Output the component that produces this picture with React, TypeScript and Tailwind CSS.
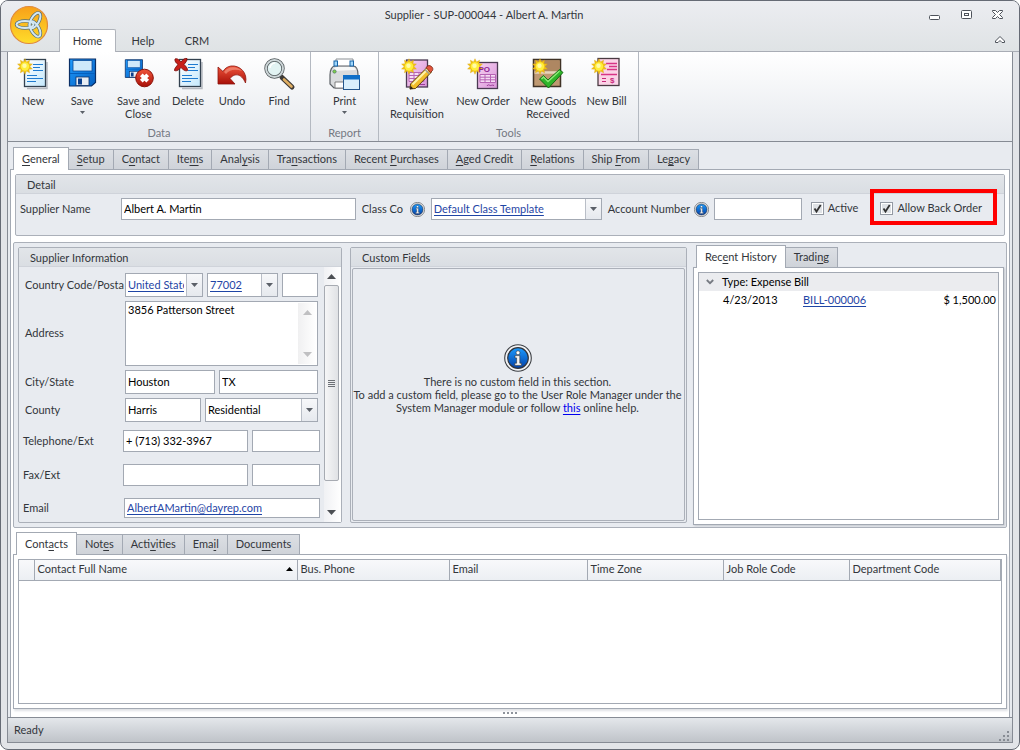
import { useState, type ReactNode } from "react";
import clsx from "clsx";

const inputClass =
  "min-w-0 border border-[#a3a9b3] bg-white px-[2px] pb-[2px] text-[11px] leading-4 text-black outline-none";

/* "&" marks the access key, as in a menu caption */
function Caption({ text }: { text: string }) {
  const at = text.indexOf("&");
  if (at < 0) return <>{text}</>;
  return (
    <>
      {text.slice(0, at)}
      <span className="underline underline-offset-2">{text[at + 1]}</span>
      {text.slice(at + 2)}
    </>
  );
}

function Tabs({ items, className }: { items: string[]; className?: string }) {
  const [active, setActive] = useState(0);
  return (
    <div role="tablist" className={clsx("flex h-[22px] items-end", className)}>
      {items.map((item, i) => (
        <button
          key={item}
          type="button"
          role="tab"
          aria-selected={i === active}
          onClick={() => setActive(i)}
          className={clsx(
            "shrink-0 border-t border-r border-[#a3a9b3] px-2 whitespace-nowrap",
            i === 0 && "border-l",
            i === active
              ? "relative -mb-px h-[23px] bg-white"
              : "h-5 bg-linear-to-b from-[#dcdfe4] to-[#cfd3d9]"
          )}
        >
          <Caption text={item} />
        </button>
      ))}
    </div>
  );
}

function Group({
  title,
  className,
  children,
}: {
  title: string;
  className?: string;
  children: ReactNode;
}) {
  return (
    <section
      className={clsx(
        "flex flex-col rounded-xs border border-[#abb0b9] bg-[#e8ebf0]",
        className
      )}
    >
      <h2 className="h-[19px] shrink-0 border-b border-[#cfd3da] bg-linear-to-b from-[#e2e5e9] to-[#dadee3] px-[11px] leading-[19px]">
        {title}
      </h2>
      {children}
    </section>
  );
}

function DropDown({
  id,
  label,
  value,
  link,
  className,
}: {
  id: string;
  label?: string;
  value: string;
  link?: boolean;
  className?: string;
}) {
  return (
    <div className={clsx("relative", className)}>
      <select
        id={id}
        aria-label={label}
        defaultValue={value}
        className={clsx(
          "h-full w-full appearance-none border border-[#a3a9b3] bg-white pr-[18px] pl-[2px] text-[11px] outline-none",
          link ? "text-[#1f45a5] underline underline-offset-2" : "text-black"
        )}
      >
        <option>{value}</option>
      </select>
      <span className="pointer-events-none absolute inset-y-px right-px flex w-4 items-center justify-center border-l border-[#b9bec7] bg-linear-to-b from-[#f7f8fa] to-[#e6e9ee]">
        <svg width="7" height="4" viewBox="0 0 7 4">
          <path d="M0 0h7L3.5 4z" fill="#5b6068" />
        </svg>
      </span>
    </div>
  );
}

function CheckBox({ id, label, children }: { id: string; label: string; children?: ReactNode }) {
  return (
    <div className="relative flex h-4 items-center pb-[2px]">
      <span className="grid size-[13px] shrink-0">
        <input
          id={id}
          type="checkbox"
          defaultChecked
          className="peer col-start-1 row-start-1 size-[13px] appearance-none border border-[#9399a3] bg-[#dfe2e6] shadow-[inset_0_0_0_1px_#fff]"
        />
        <svg
          viewBox="0 0 13 13"
          className="pointer-events-none invisible col-start-1 row-start-1 size-[13px] peer-checked:visible"
        >
          <path d="M3.5 6.5 5.5 9.5 9.7 3" fill="none" stroke="#333" strokeWidth="1.8" />
        </svg>
      </span>
      <label htmlFor={id} className="ml-1 whitespace-nowrap">
        {label}
      </label>
      {children}
    </div>
  );
}

function InfoIcon({ size }: { size: number }) {
  return (
    <svg width={size} height={size} viewBox="0 0 28 28" className="shrink-0">
      <defs>
        <linearGradient id="info" x1="0" y1="0" x2="0" y2="1">
          <stop offset="0" stopColor="#1b9bff" />
          <stop offset="1" stopColor="#0340a8" />
        </linearGradient>
      </defs>
      <circle cx="14" cy="14" r="13.3" fill="#f2f3f5" stroke="#3c3f44" strokeWidth="1.1" />
      <circle cx="14" cy="14" r="10.3" fill="url(#info)" stroke="#30343c" strokeWidth="1.2" />
      <circle cx="14" cy="8.8" r="2" fill="#fff" stroke="#333" strokeWidth=".6" />
      <path
        d="M11 11.6h4.8v7.6h1.6v2.2h-6.6v-2.2h1.8v-5.3H11z"
        fill="#f4f4f4"
        stroke="#333"
        strokeWidth=".6"
      />
    </svg>
  );
}

const starPoints = Array.from({ length: 20 }, (_, i) => {
  const r = i % 2 ? 4.8 : 7.8;
  const a = (i * Math.PI) / 10;
  return `${(8 + r * Math.sin(a)).toFixed(2)},${(8.5 - r * Math.cos(a)).toFixed(2)}`;
}).join(" ");

function Star() {
  return (
    <g>
      <polygon points={starPoints} fill="#f2c414" stroke="#d9a20c" strokeWidth=".4" />
      <circle cx="8" cy="8.5" r="4.200" fill="#ffee3c" />
      <circle cx="7.500" cy="7.800" r="2.200" fill="#fffba8" />
    </g>
  );
}

function Sheet() {
  return (
    <g>
      <path d="M10 30.500h20V4" stroke="#b6bac0" strokeWidth="1.500" fill="none" />
      <rect x="7.500" y="1.500" width="21" height="27" fill="url(#sheet)" stroke="#33414f" strokeWidth="1.300" />
      <path
        d="M16 6.500h10M16 9.500h7M16 12.500h10M10 17.500h10M10 20.500h16M10 23.500h9"
        stroke="#1f7bd0"
        strokeWidth="1.200"
      />
    </g>
  );
}

function Disk() {
  return (
    <g>
      <path d="M3.500 1h26v23.500L25.500 28h-22z" fill="url(#disk)" stroke="#0a2f66" strokeWidth="1.200" />
      <rect x="7" y="2.500" width="19" height="10.500" fill="#cfe9fb" stroke="#0a4a98" strokeWidth=".8" />
      <path d="M4 15.500h25" stroke="#0660bd" strokeWidth="1" />
      <rect x="10" y="19" width="13" height="8.500" fill="#e9eef4" stroke="#0a2f66" strokeWidth=".8" />
      <rect x="12" y="20.500" width="4" height="6" fill="#0a3f8c" />
    </g>
  );
}

/* gradients shared by the ribbon icons */
function IconDefs() {
  return (
    <svg width="0" height="0" className="absolute">
      <defs>
        <linearGradient id="disk" x1="0" y1="0" x2="1" y2="1">
          <stop offset="0" stopColor="#1f9bff" />
          <stop offset="1" stopColor="#0560c0" />
        </linearGradient>
        <linearGradient id="sheet" x1="0" y1="0" x2="1" y2="1">
          <stop offset="0" stopColor="#ffffff" />
          <stop offset="1" stopColor="#c4e8fc" />
        </linearGradient>
        <linearGradient id="violet" x1="0" y1="0" x2="1" y2="1">
          <stop offset="0" stopColor="#f6d3f2" />
          <stop offset="1" stopColor="#d993d8" />
        </linearGradient>
        <linearGradient id="red" x1="0" y1="0" x2="0" y2="1">
          <stop offset="0" stopColor="#f0553c" />
          <stop offset="1" stopColor="#a81008" />
        </linearGradient>
      </defs>
    </svg>
  );
}

const icons: Record<string, ReactNode> = {
  new: (
    <>
      <Sheet />
      <Star />
    </>
  ),
  save: <Disk />,
  saveClose: (
    <>
      <g transform="translate(0 1) scale(.66)">
        <Disk />
      </g>
      <circle cx="21.500" cy="20" r="8.800" fill="url(#red)" stroke="#8b1208" strokeWidth="1" />
      <path d="M18.300 16.800l6.400 6.400m0-6.400l-6.400 6.400" stroke="#fff" strokeWidth="3.800" />
    </>
  ),
  delete: (
    <>
      <Sheet />
      <path
        d="M3 1c2.500-1 4 1 6 3 2-2.500 3.500-4 6-3.500.500 2-1.500 4-3 6 2 2 3.500 3.500 3.500 6-2.500 1-4.500-1-6.500-3-2 2-4 4-6.500 3 0-2.500 2-4 3.500-6C4 5 2.500 3 3 1z"
        fill="#c8201a"
        stroke="#7c0f0b"
        strokeWidth=".9"
      />
    </>
  ),
  undo: (
    <>
      <path
        d="M2 9v17h17l-5-5.500c4-5 11-6 15.500 4.500C32 15 24 7 15 8c-4 .6-6.500 2.800-8 5.500z"
        fill="url(#red)"
        stroke="#8e150c"
        strokeWidth=".8"
      />
      <path d="M8 14c4-6 13-6 18-1-6-2-12-2-16 3z" fill="#f7a08c" opacity=".6" />
    </>
  ),
  find: (
    <>
      <path d="M19 19.500l10 9.500" stroke="#3f3a36" strokeWidth="5" strokeLinecap="round" />
      <path d="M21 21.500l7.500 7" stroke="#dfae62" strokeWidth="2.600" strokeLinecap="round" />
      <circle cx="11.500" cy="10.500" r="8.500" fill="#e2f3f3" stroke="#4f5659" strokeWidth="3.400" />
      <circle cx="11.500" cy="10.500" r="8.500" fill="none" stroke="#cdd6d8" strokeWidth="1.900" />
      <path d="M7 10a5 5 0 0 1 5-5" stroke="#fff" strokeWidth="1.500" fill="none" />
    </>
  ),
  print: (
    <>
      <path d="M7 8V1h17v7" fill="#fff" stroke="#8b9095" />
      <path
        d="M1 26V17c0-5 2-9 5-9h18c3 0 5 3.500 5 9v10l-3 3H5z"
        fill="#d9dbdd"
        stroke="#5c6166"
        strokeWidth="1.200"
      />
      <path d="M4 13c1-3 2-4 4-4h15c2 0 3 1 4 3z" fill="#f6f7f7" />
      <path d="M6 30v-6h9v6z" fill="#fff" stroke="#666" strokeWidth=".8" />
      <rect x="5" y="3" width="3.500" height="5" fill="#9fd6fb" stroke="#1764a8" />
      <rect x="21" y="3" width="3.500" height="5" fill="#9fd6fb" stroke="#1764a8" />
      <circle cx="5.500" cy="13.500" r="1.700" fill="#7fd04a" stroke="#466" strokeWidth=".6" />
      <rect x="14.500" y="17.500" width="16" height="14" fill="#d9effc" stroke="#24568c" />
      <rect x="14" y="17" width="17" height="4.500" fill="#0f6fc8" />
    </>
  ),
  requisition: (
    <>
      <rect x="5.500" y="2" width="21" height="27" fill="url(#violet)" stroke="#4a3a52" strokeWidth="1.300" />
      <path
        d="M8 14.500h15v9H8zM8 17.500h15M8 20.500h15M13 14.500v9M18 14.500v9"
        stroke="#b663b4"
        fill="#f6dcf4"
      />
      <path d="M18 26.500h6" stroke="#9a3d98" />
      <Star />
      <path d="M9.500 26L26 9.500l4.500 4.500L14.500 30.500l-5.500.5z" fill="#f2bd2b" stroke="#5e430c" strokeWidth="1" />
      <path d="M11.500 26.500L27 11" stroke="#fdf3a8" strokeWidth="2" />
      <path
        d="M25 9.500l2-1.700c2.500-1 6 2 4.500 4.700l-2 2z"
        fill="#e2553c"
        stroke="#752416"
        strokeWidth=".8"
      />
      <path d="M23.500 11l5 5" stroke="#9a9a9a" strokeWidth="1.200" />
      <path d="M8.800 31.200l.8-3.500 2.800 3z" fill="#2f2415" />
    </>
  ),
  order: (
    <>
      <rect x="10.500" y="4.500" width="20" height="26" fill="url(#violet)" stroke="#4a3a52" strokeWidth="1.300" />
      <path
        d="M13 16.500h15.500v8H13zM13 19.200h15.500M13 21.800h15.500M18 16.500v8M23.500 16.500v8"
        stroke="#b663b4"
        fill="#f6dcf4"
      />
      <path d="M20 28c1-2 2-1 3-.5s2-1 4 0" stroke="#9a3d98" fill="none" />
      <Star />
      <text
        x="11.500"
        y="14"
        fontSize="8"
        fontWeight="700"
        fill="#8c2390"
        fontFamily="Liberation Sans, sans-serif"
      >
        PO
      </text>
    </>
  ),
  goods: (
    <>
      <rect x="1.500" y="1.500" width="27" height="27" fill="#bf9972" stroke="#3f3226" strokeWidth="1.500" />
      <rect x="2.500" y="2.500" width="25" height="11" fill="#ae8762" />
      <path d="M2.500 14.500h25" stroke="#e6d4bd" strokeWidth="2.500" />
      <Star />
      <path
        d="M7.500 21l4-3.500 4.500 4.500L27.500 11.500l3.500 3L16.500 30z"
        fill="#2fb52a"
        stroke="#136b12"
        strokeWidth="1"
      />
      <path d="M9.500 21l2-2 4.500 4.500L27.500 13" stroke="#8fea78" strokeWidth="1.300" fill="none" />
    </>
  ),
  bill: (
    <>
      <rect x="7" y="0.500" width="21" height="27" fill="#fbd3e6" stroke="#4a3a42" strokeWidth="1.300" />
      <path d="M15 5.500h11M18 8.500h8M16 11.500h10M10 16.500h16" stroke="#d83486" strokeWidth="1.300" />
      <path d="M11 20.500h4M11 23.500h4" stroke="#c9277a" strokeWidth="1.200" />
      <text
        x="19"
        y="25"
        fontSize="8"
        fontWeight="700"
        fill="#c9277a"
        fontFamily="Liberation Sans, sans-serif"
      >
        $
      </text>
      <Star />
    </>
  ),
};

type Command = { icon: string; lines: string[]; width: string; menu?: boolean };

const ribbon: { title: string; padding: string; commands: Command[] }[] = [
  {
    title: "Data",
    padding: "pl-[2px] pr-[9px]",
    commands: [
      { icon: "new", lines: ["New"], width: "w-[46px]" },
      { icon: "save", lines: ["Save"], width: "w-[52px]", menu: true },
      { icon: "saveClose", lines: ["Save and", "Close"], width: "w-[61px]" },
      { icon: "delete", lines: ["Delete"], width: "w-[38px]" },
      { icon: "undo", lines: ["Undo"], width: "w-[50px]" },
      { icon: "find", lines: ["Find"], width: "w-[44px]" },
    ],
  },
  {
    title: "Report",
    padding: "",
    commands: [{ icon: "print", lines: ["Print"], width: "w-[67px]", menu: true }],
  },
  {
    title: "Tools",
    padding: "px-[5px]",
    commands: [
      { icon: "requisition", lines: ["New", "Requisition"], width: "w-[66px]" },
      { icon: "order", lines: ["New Order"], width: "w-[66px]" },
      { icon: "goods", lines: ["New Goods", "Received"], width: "w-[64px]" },
      { icon: "bill", lines: ["New Bill"], width: "w-[53px]" },
    ],
  },
];

function Ribbon() {
  return (
    <div className="mx-[6px] flex h-[90px] border-x border-b border-[#868b94] bg-linear-to-b from-white to-[#e5e8ed]">
      <IconDefs />
      {ribbon.map((group) => (
        <div key={group.title} className="flex flex-col border-r border-[#b4b9c1]">
          <div className={clsx("flex flex-1 pt-[6px]", group.padding)}>
            {group.commands.map((c) => (
              <button
                key={c.icon}
                type="button"
                className={clsx("flex flex-col items-center leading-[13px]", c.width)}
              >
                <svg width="32" height="32" viewBox="0 0 32 32" className="mb-1 overflow-visible">
                  {icons[c.icon]}
                </svg>
                {c.lines.map((line) => (
                  <span key={line} className="whitespace-nowrap">
                    {line}
                  </span>
                ))}
                {c.menu && (
                  <svg width="5" height="3" viewBox="0 0 5 3" className="mt-1">
                    <path d="M0 0h5L2.500 3z" fill="#5b6068" />
                  </svg>
                )}
              </button>
            ))}
          </div>
          <div className="h-[15px] text-center leading-[13px] text-[#747882]">{group.title}</div>
        </div>
      ))}
    </div>
  );
}

function Knot() {
  return (
    <>
      <ellipse cx="16" cy="19.500" rx="8.500" ry="3.600" />
      <ellipse cx="26" cy="15.500" rx="8.500" ry="4" transform="rotate(-60 26 15.500)" />
      <ellipse cx="26" cy="24" rx="8.500" ry="4" transform="rotate(60 26 24)" />
    </>
  );
}

function TitleBar() {
  return (
    <header className="flex h-[51px] border-b border-[#a9adb5] bg-linear-to-b from-[#ecedf1] to-[#dfe3e5]">
      <button type="button" aria-label="Application menu" className="mt-1 ml-2 size-10 shrink-0">
        <svg width="40" height="40" viewBox="0 0 40 40">
          <defs>
            <linearGradient id="orb" x1="0" y1="0" x2="0" y2="1">
              <stop offset="0" stopColor="#f7a019" />
              <stop offset="1" stopColor="#ffdd2b" />
            </linearGradient>
          </defs>
          <circle cx="20" cy="20" r="18.500" fill="url(#orb)" stroke="#e08a3c" strokeWidth="1.200" />
          <g fill="none" stroke="#4f6b7a" strokeWidth="3.400">
            <Knot />
          </g>
          <g fill="none" stroke="#d3e7f2" strokeWidth="2">
            <Knot />
          </g>
        </svg>
      </button>
      <div className="flex min-w-0 flex-1 flex-col">
        <div className="flex h-[29px] items-center">
          <h1 className="flex-1 truncate text-center">Supplier - SUP-000044 - Albert A. Martin</h1>
          <div className="flex pr-[6px] text-[#4d525a]">
            <button type="button" aria-label="Minimize" className="flex w-[31px] justify-center">
              <svg width="13" height="13" viewBox="0 0 13 13" fill="none" stroke="currentColor">
                <rect x="1.500" y="6.500" width="10" height="4" rx="1" fill="#fff" />
              </svg>
            </button>
            <button type="button" aria-label="Restore" className="flex w-[32px] justify-center">
              <svg width="13" height="13" viewBox="0 0 13 13" fill="none" stroke="currentColor">
                <rect x="1.500" y="1.500" width="10" height="8" rx="1" fill="#fff" />
                <rect x="4.500" y="4.500" width="4" height="2" />
              </svg>
            </button>
            <button type="button" aria-label="Close" className="flex w-[31px] justify-center">
              <svg width="13" height="13" viewBox="0 0 13 13" fill="#fff" stroke="currentColor">
                <path d="M1.500 1.500h3l2 2 2-2h3v1L8.500 5.500l3 3v1h-3l-2-2-2 2h-3v-1l3-3-3-3z" />
              </svg>
            </button>
          </div>
        </div>
        <div role="tablist" className="flex items-end pl-[10px]">
          <button
            type="button"
            role="tab"
            aria-selected="true"
            className="relative -mb-px h-[23px] w-[57px] rounded-t-xs border border-b-0 border-[#b0b4bb] bg-white"
          >
            Home
          </button>
          <button type="button" role="tab" aria-selected="false" className="h-5 w-[54px]">
            Help
          </button>
          <button type="button" role="tab" aria-selected="false" className="h-5 w-[54px]">
            CRM
          </button>
          <button type="button" aria-label="Collapse ribbon" className="mr-[14px] ml-auto self-center">
            <svg width="10" height="8" viewBox="0 0 10 8" fill="#fff" stroke="#4d525a">
              <path d="M5 .5l4.500 4.500v1.500H7L5 4.500 3 6.500H.5V5z" />
            </svg>
          </button>
        </div>
      </div>
    </header>
  );
}

function DetailGroup() {
  return (
    <Group title="Detail" className="mx-1 h-[62px]">
      <div className="flex h-[30px] items-center pl-1">
        <label htmlFor="name" className="w-[101px] shrink-0">
          Supplier Name
        </label>
        <input id="name" defaultValue="Albert A. Martin" className={clsx(inputClass, "h-[22px] flex-1")} />
        <label htmlFor="class" className="ml-[6px] w-12 shrink-0 whitespace-nowrap">
          Class Co
        </label>
        <InfoIcon size={15} />
        <DropDown
          id="class"
          value="Default Class Template"
          link
          className="ml-[6px] h-[22px] w-[171px] shrink-0"
        />
        <label htmlFor="account" className="ml-[6px] w-[86px] shrink-0 whitespace-nowrap">
          Account Number
        </label>
        <InfoIcon size={15} />
        <input id="account" className={clsx(inputClass, "mr-[9px] ml-[5px] h-[22px] w-[88px] shrink-0")} />
        <CheckBox id="active" label="Active" />
        <div className="mr-[22px] ml-[22px]">
          <CheckBox id="backorder" label="Allow Back Order">
            {/* highlight frame */}
            <span className="pointer-events-none absolute -top-3 -right-[15px] -bottom-2 -left-[10px] border-4 border-[#f00]" />
          </CheckBox>
        </div>
      </div>
    </Group>
  );
}

function SupplierGroup() {
  return (
    <Group title="Supplier Information" className="w-[324px] shrink-0">
      <div className="flex flex-1">
        <form className="flex min-w-0 flex-1 flex-col pt-[6px]">
          <div className="flex flex-col gap-1 pr-[2px] pl-[6px]">
            <div className="flex h-6 items-center gap-1">
              <label htmlFor="country" className="-mr-1 w-[100px] shrink-0 whitespace-nowrap">
                Country Code/Posta
              </label>
              <DropDown
                id="country"
                value="United States of America"
                link
                className="h-6 w-[78px] shrink-0"
              />
              <DropDown id="postal" label="Postal code" value="77002" link className="h-6 w-[71px] shrink-0" />
              <input aria-label="Postal extension" className={clsx(inputClass, "h-6 flex-1")} />
            </div>
            <div className="flex items-center">
              <label htmlFor="address" className="w-[100px] shrink-0">
                Address
              </label>
              <div className="flex h-[65px] min-w-0 flex-1 border border-[#a3a9b3] bg-white p-px">
                <textarea
                  id="address"
                  defaultValue="3856 Patterson Street"
                  className="min-w-0 flex-1 resize-none px-px text-[11px] leading-[14px] text-black outline-none"
                />
                <div className="flex w-[18px] shrink-0 flex-col items-center justify-between bg-linear-to-r from-[#f0f0f1] to-white py-[7px]">
                  <svg width="9" height="5" viewBox="0 0 9 5">
                    <path d="M0 5h9L4.500 0z" fill="#c0c0c2" />
                  </svg>
                  <svg width="9" height="5" viewBox="0 0 9 5">
                    <path d="M0 0h9L4.500 5z" fill="#c0c0c2" />
                  </svg>
                </div>
              </div>
            </div>
            <div className="flex h-6 items-center gap-1">
              <label htmlFor="city" className="-mr-1 w-[100px] shrink-0">
                City/State
              </label>
              <input id="city" defaultValue="Houston" className={clsx(inputClass, "h-6 w-[90px] shrink-0")} />
              <input aria-label="State" defaultValue="TX" className={clsx(inputClass, "h-6 flex-1")} />
            </div>
            <div className="flex h-6 items-center gap-1">
              <label htmlFor="county" className="-mr-1 w-[100px] shrink-0">
                County
              </label>
              <input id="county" defaultValue="Harris" className={clsx(inputClass, "h-6 w-[76px] shrink-0")} />
              <DropDown id="addressType" label="Address type" value="Residential" className="h-6 flex-1" />
            </div>
          </div>
          <div className="mt-2 flex flex-col gap-3 pl-1">
            <div className="flex h-[22px] items-center gap-1">
              <label htmlFor="phone" className="-mr-1 w-[100px] shrink-0">
                Telephone/Ext
              </label>
              <input
                id="phone"
                defaultValue="+ (713) 332-3967"
                className={clsx(inputClass, "h-[22px] w-[125px] shrink-0")}
              />
              <input aria-label="Telephone extension" className={clsx(inputClass, "h-[22px] flex-1")} />
            </div>
            <div className="flex h-[22px] items-center gap-1">
              <label htmlFor="fax" className="-mr-1 w-[100px] shrink-0">
                Fax/Ext
              </label>
              <input id="fax" className={clsx(inputClass, "h-[22px] w-[125px] shrink-0")} />
              <input aria-label="Fax extension" className={clsx(inputClass, "h-[22px] flex-1")} />
            </div>
            <div className="flex h-5 items-center">
              <label htmlFor="email" className="w-[101px] shrink-0">
                Email
              </label>
              <div className="flex h-5 min-w-0 flex-1 items-center border border-[#a3a9b3] bg-white px-[2px]">
                <input
                  id="email"
                  type="email"
                  defaultValue="AlbertAMartin@dayrep.com"
                  className="field-sizing-content h-[14px] border-b border-[#1f45a5] text-[11px] leading-[13px] text-[#1f45a5] outline-none"
                />
              </div>
            </div>
          </div>
        </form>
        <div className="ml-[4px] flex w-[17px] shrink-0 flex-col items-center bg-linear-to-r from-[#f0f1f4] to-white pr-[2px]">
          <svg width="9" height="5" viewBox="0 0 9 5" className="mt-[7px] mb-[6px]">
            <path d="M0 5h9L4.500 0z" fill="#4c4f54" />
          </svg>
          <div className="flex h-[196px] w-[15px] flex-col items-center justify-center gap-px rounded-xs border border-[#a7abb2] bg-linear-to-r from-[#f6f6f7] to-[#e0e2e5]">
            <span className="h-px w-[7px] bg-[#6d7076]" />
            <span className="h-px w-[7px] bg-[#6d7076]" />
            <span className="h-px w-[7px] bg-[#6d7076]" />
            <span className="h-px w-[7px] bg-[#6d7076]" />
          </div>
          <svg width="9" height="5" viewBox="0 0 9 5" className="mt-auto mb-[7px]">
            <path d="M0 0h9L4.500 5z" fill="#4c4f54" />
          </svg>
        </div>
      </div>
    </Group>
  );
}

function CustomFields() {
  return (
    <Group title="Custom Fields" className="ml-2 min-w-0 flex-1">
      <div className="m-px flex flex-1 flex-col items-center rounded-xs border border-[#abb0b9] pt-[75px] pr-[2px] text-center leading-[13px]">
        <InfoIcon size={28} />
        <p className="mt-[3px]">There is no custom field in this section.</p>
        <p>
          To add a custom field, please go to the User Role Manager under the
          <br />
          <span>System Manager module or follow </span>
          <a href="#help" className="text-[#0000ee] underline underline-offset-2">
            this
          </a>
          <span> online help.</span>
        </p>
      </div>
    </Group>
  );
}

function HistoryPanel() {
  return (
    <div className="-mt-[2px] ml-[6px] flex w-[311px] shrink-0 flex-col">
      <Tabs items={["Rec&ent History", "Tradi&ng"]} className="pl-[3px]" />
      <div className="-mb-[2px] flex flex-1 flex-col border border-[#a3a9b3] bg-white p-1 shadow-[1px_1px_2px_#c3c7ce]">
        <div className="flex-1 border border-[#a3a9b3] text-black">
          <button type="button" className="flex h-[18px] w-full items-center bg-[#ebecef]">
            <svg width="8" height="6" viewBox="0 0 8 6" className="mx-[7px]">
              <path d="M.8 1 4 4.200 7.200 1" fill="none" stroke="#777b82" strokeWidth="1.800" />
            </svg>
            <span className="ml-px">Type: Expense Bill</span>
          </button>
          <div className="flex h-[18px] items-center pr-[2px] pl-6">
            <span className="w-20">4/23/2013</span>
            <a href="#bill" className="text-[#1f45a5] underline underline-offset-2">
              BILL-000006
            </a>
            <span className="ml-auto">$ 1,500.00</span>
          </div>
        </div>
      </div>
    </div>
  );
}

const columns = [
  { title: "", width: "w-[15px]" },
  { title: "Contact Full Name", width: "w-[263px]" },
  { title: "Bus. Phone", width: "w-[152px]" },
  { title: "Email", width: "w-[138px]" },
  { title: "Time Zone", width: "w-[136px]" },
  { title: "Job Role Code", width: "w-[126px]" },
  { title: "Department Code", width: "" },
];

function ContactsGrid() {
  return (
    <div className="mx-[2px] flex flex-1 flex-col border border-[#a3a9b3] bg-white p-1 shadow-[1px_2px_2px_#dfe1e5]">
      <div className="flex-1 border border-[#a3a9b3]">
        <table className="w-full table-fixed border-collapse text-left leading-[18px]">
          <thead>
            <tr className="h-5 bg-linear-to-b from-[#f8f9fb] to-[#eceff3]">
              {columns.map((c) => (
                <th
                  key={c.title}
                  scope="col"
                  className={clsx(
                    "border-r border-b border-[#a3a9b3] py-0 pr-1 pl-[3px] align-top font-normal whitespace-nowrap",
                    c.width
                  )}
                >
                  <span className="flex items-center justify-between">
                    {c.title}
                    {c.title === "Contact Full Name" && (
                      <svg width="7" height="4" viewBox="0 0 7 4">
                        <path d="M0 4h7L3.500 0z" fill="#000" />
                      </svg>
                    )}
                  </span>
                </th>
              ))}
            </tr>
          </thead>
          <tbody />
        </table>
      </div>
    </div>
  );
}

export default function App() {
  return (
    <div className="flex min-h-screen flex-col overflow-hidden rounded-lg border border-[#666b75] bg-[#e2e4e8] font-['Lato',sans-serif] text-[11px] text-[#33363b]">
      <TitleBar />
      <Ribbon />
      <div className="mx-[6px] flex flex-1 flex-col border-x border-[#868b94] bg-[#e8ebf0]">
        <Tabs
          className="mt-[5px] ml-[5px]"
          items={[
            "&General",
            "&Setup",
            "C&ontact",
            "Ite&ms",
            "Anal&ysis",
            "Tra&nsactions",
            "Recent &Purchases",
            "&Aged Credit",
            "&Relations",
            "Ship &From",
            "Le&gacy",
          ]}
        />
        <main className="mx-[2px] flex flex-1 flex-col border border-b-0 border-[#a3a9b3] bg-white pt-1">
          <DetailGroup />
          <div className="mx-[2px] mt-[6px] flex h-[286px] rounded-xs border border-[#abb0b9] bg-[#e8ebf0] p-1 pr-[2px]">
            <SupplierGroup />
            <CustomFields />
            <HistoryPanel />
          </div>
          <Tabs
            className="mt-1 ml-[5px]"
            items={["Cont&acts", "Not&es", "Acti&vities", "Ema&il", "Docu&ments"]}
          />
          <ContactsGrid />
          <div className="flex h-2 items-center justify-center gap-[2px]">
            {[0, 1, 2, 3].map((i) => (
              <span key={i} className="size-[2px] bg-[#8f949c]" />
            ))}
          </div>
        </main>
      </div>
      <footer className="mx-[6px] mb-[6px] flex h-[26px] items-center border border-[#868b94] bg-linear-to-b from-[#e4e7eb] to-[#bfc3c9] px-[6px]">
        Ready
        <svg width="11" height="11" viewBox="0 0 11 11" className="-mr-1 ml-auto self-end" fill="#878c94">
          <path d="M8 0h2v2H8zM8 4h2v2H8zM8 8h2v2H8zM4 4h2v2H4zM4 8h2v2H4zM0 8h2v2H0z" />
        </svg>
      </footer>
    </div>
  );
}
